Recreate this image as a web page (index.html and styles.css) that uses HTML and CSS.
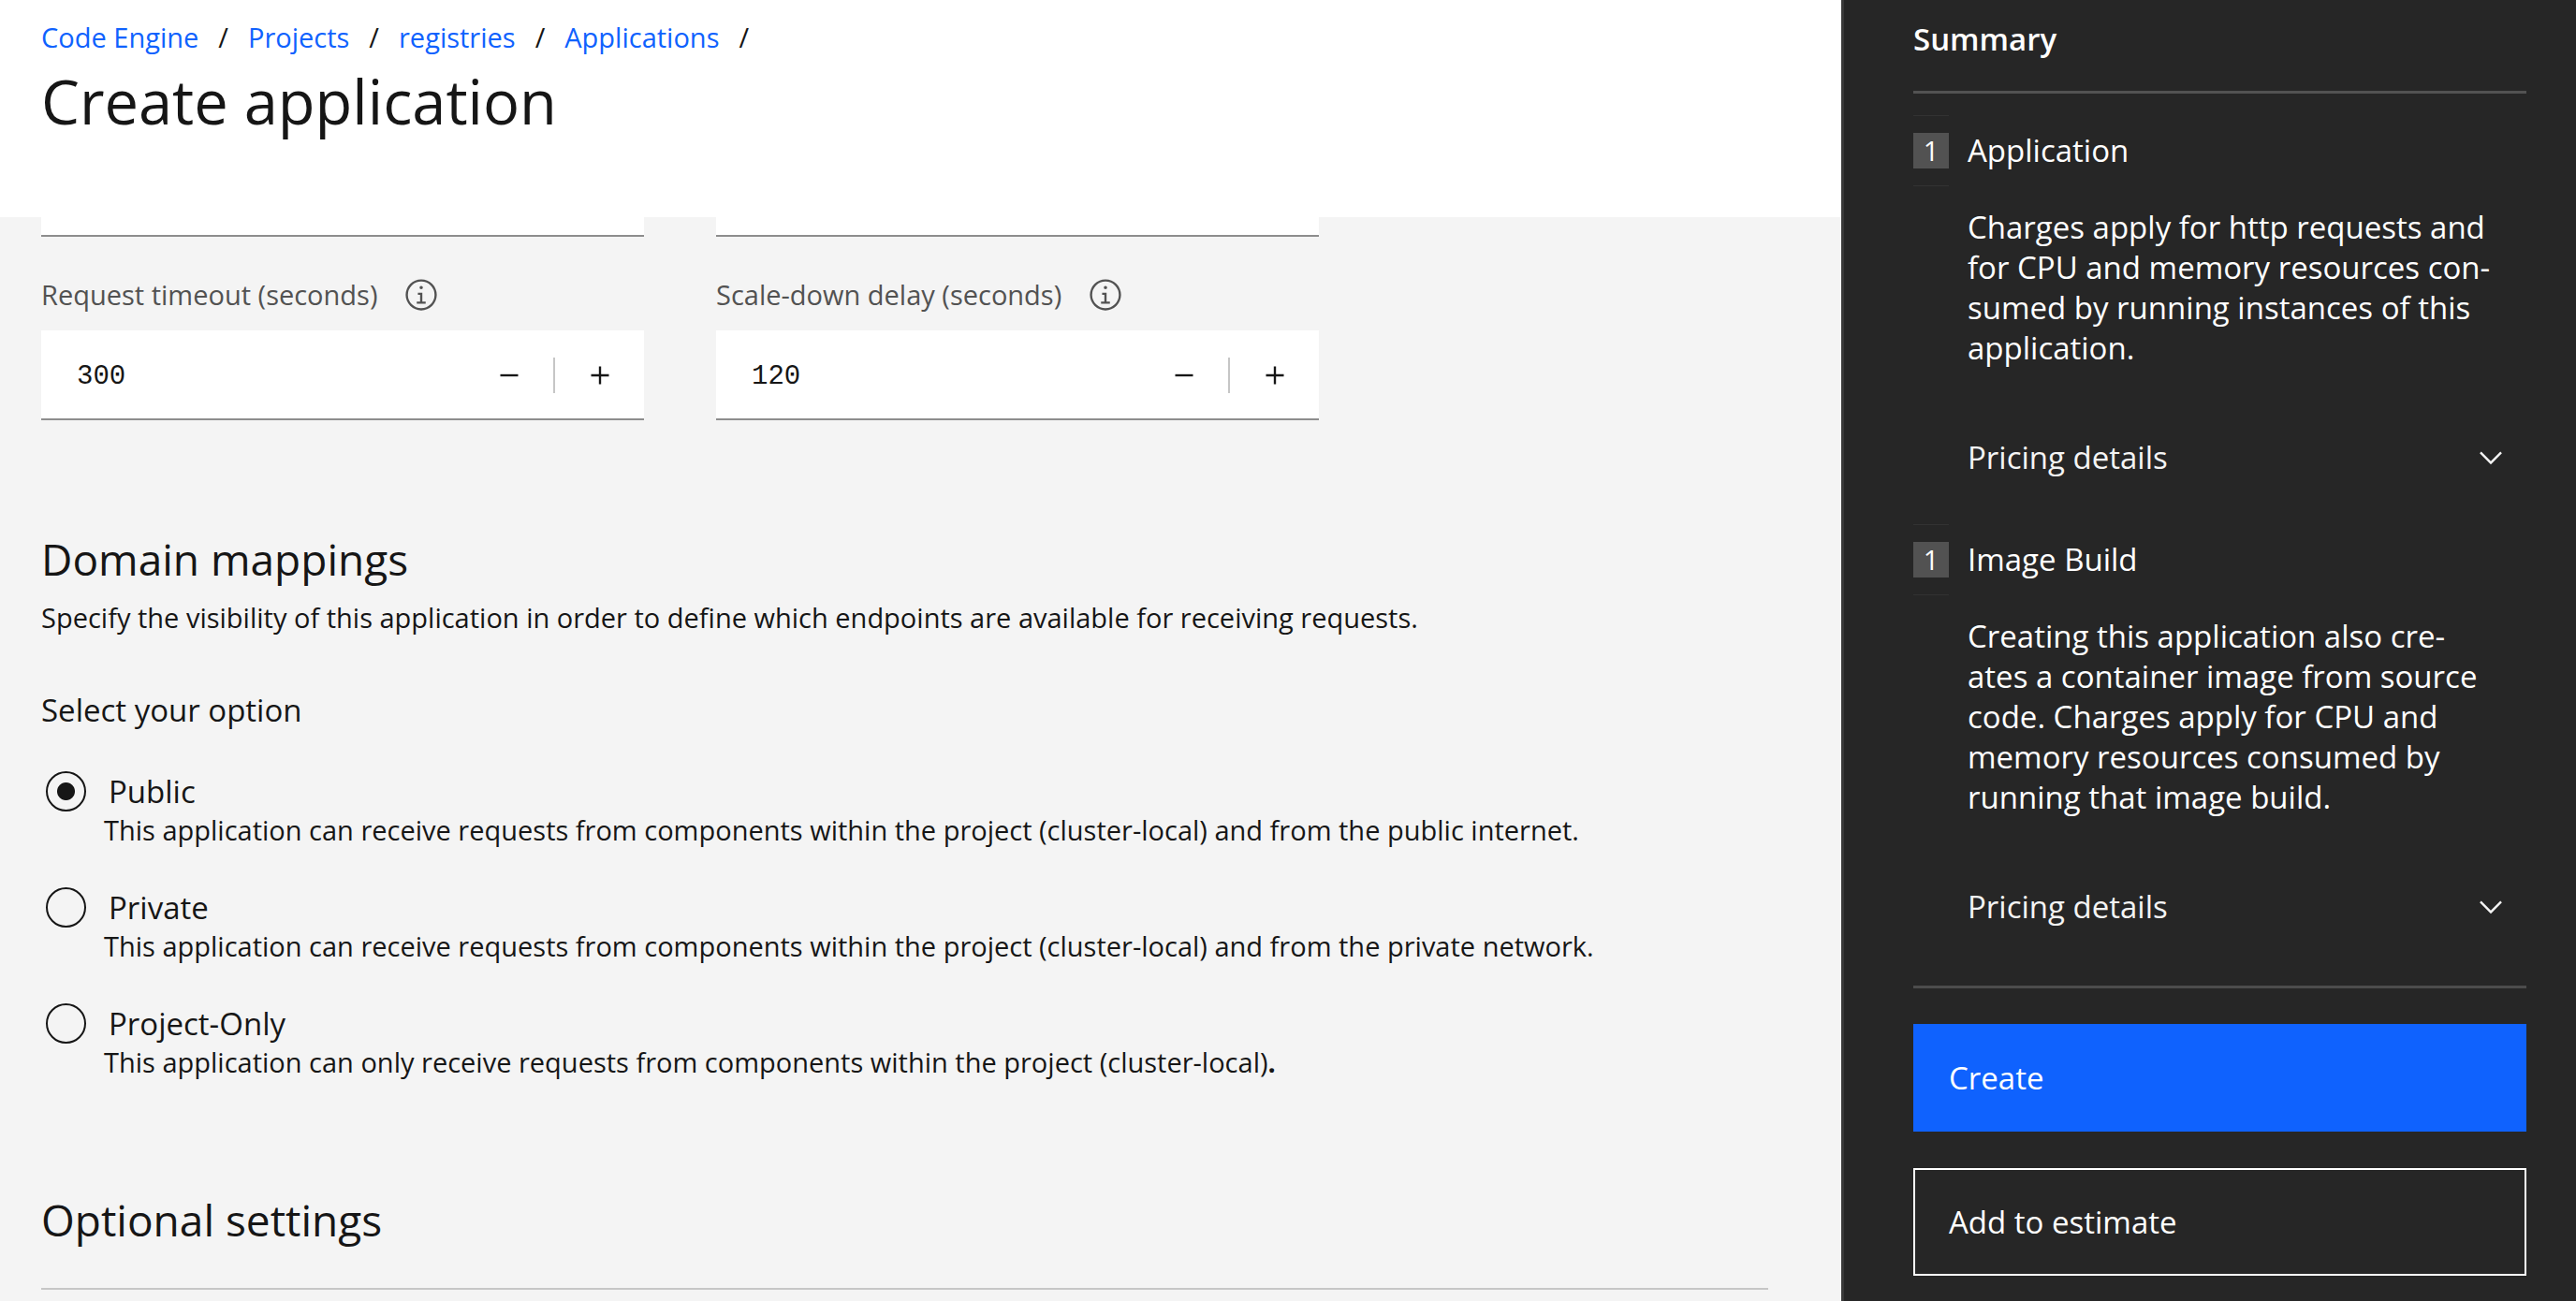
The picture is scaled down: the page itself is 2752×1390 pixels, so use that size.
FILE: index.html
```html
<!DOCTYPE html>
<html lang="en">
<head>
<meta charset="utf-8">
<meta name="viewport" content="width=device-width, initial-scale=1">
<title>Create application</title>
<link rel="stylesheet" href="styles.css">
</head>
<body>
<svg class="sprite" aria-hidden="true">
  <symbol id="info" viewBox="0 0 32 32"><path d="M17 22v-8h-4v2h2v6h-3v2h8v-2zM16 8a1.5 1.5 0 1 0 1.5 1.5A1.5 1.5 0 0 0 16 8z"/><path d="M16 30a14 14 0 1 1 14-14 14 14 0 0 1-14 14zm0-26a12 12 0 1 0 12 12A12 12 0 0 0 16 4z"/></symbol>
  <symbol id="minus" viewBox="0 0 32 32"><path d="M8 15h16v2H8z"/></symbol>
  <symbol id="plus" viewBox="0 0 32 32"><path d="M17 15V8h-2v7H8v2h7v7h2v-7h7v-2z"/></symbol>
  <symbol id="chevron" viewBox="0 0 16 16"><path d="M8 11L3 6l.7-.7L8 9.6l4.300-4.300.7.7z"/></symbol>
</svg>
<div class="page">
  <main class="main">
    <header class="header">
      <nav aria-label="Breadcrumb">
        <ol class="breadcrumb">
          <li><a href="#">Code Engine</a></li>
          <li><a href="#">Projects</a></li>
          <li><a href="#">registries</a></li>
          <li><a href="#">Applications</a></li>
        </ol>
      </nav>
      <h1>Create application</h1>
    </header>
    <form class="content">
      <div class="fields fields-cut"><div class="cut"></div><div class="cut"></div></div>
      <div class="fields">
        <div class="field">
          <div class="field-label"><label for="timeout">Request timeout (seconds)</label>
            <button type="button" class="icon-button" aria-label="About request timeout"><svg class="icon"><use href="#info"/></svg></button></div>
          <div class="number">
            <input id="timeout" type="text" inputmode="numeric" value="300">
            <button type="button" class="step" aria-label="Decrease"><svg class="icon"><use href="#minus"/></svg></button>
            <span class="divider"></span>
            <button type="button" class="step" aria-label="Increase"><svg class="icon"><use href="#plus"/></svg></button>
          </div>
        </div>
        <div class="field">
          <div class="field-label"><label for="delay">Scale-down delay (seconds)</label>
            <button type="button" class="icon-button" aria-label="About scale-down delay"><svg class="icon"><use href="#info"/></svg></button></div>
          <div class="number">
            <input id="delay" type="text" inputmode="numeric" value="120">
            <button type="button" class="step" aria-label="Decrease"><svg class="icon"><use href="#minus"/></svg></button>
            <span class="divider"></span>
            <button type="button" class="step" aria-label="Increase"><svg class="icon"><use href="#plus"/></svg></button>
          </div>
        </div>
      </div>
      <section class="section">
        <h2>Domain mappings</h2>
        <p class="hint">Specify the visibility of this application in order to define which endpoints are available for receiving requests.</p>
        <fieldset class="options">
          <legend>Select your option</legend>
          <div class="option">
            <input type="radio" name="visibility" id="public" aria-describedby="public-hint" checked>
            <label for="public">Public</label>
            <p id="public-hint">This application can receive requests from components within the project (cluster-local) and from the public internet.</p>
          </div>
          <div class="option">
            <input type="radio" name="visibility" id="private" aria-describedby="private-hint">
            <label for="private">Private</label>
            <p id="private-hint">This application can receive requests from components within the project (cluster-local) and from the private network.</p>
          </div>
          <div class="option">
            <input type="radio" name="visibility" id="project" aria-describedby="project-hint">
            <label for="project">Project-Only</label>
            <p id="project-hint">This application can only receive requests from components within the project (cluster-local)<b>.</b></p>
          </div>
        </fieldset>
      </section>
      <section class="section optional">
        <h2>Optional settings</h2>
      </section>
    </form>
  </main>
  <aside class="summary">
    <h2>Summary</h2>
    <section class="item">
      <div class="badge">1</div>
      <h3>Application</h3>
      <p>Charges apply for http requests and for CPU and memory resources con&shy;sumed by running instances of this application.</p>
      <button type="button" class="pricing">Pricing details<svg class="icon"><use href="#chevron"/></svg></button>
    </section>
    <section class="item">
      <div class="badge">1</div>
      <h3>Image Build</h3>
      <p>Creating this application also cre&shy;ates a container image from source code. Charges apply for CPU and memory resources consumed by running that image build.</p>
      <button type="button" class="pricing">Pricing details<svg class="icon"><use href="#chevron"/></svg></button>
    </section>
    <div class="actions">
      <button type="button" class="action primary">Create</button>
      <button type="button" class="action">Add to estimate</button>
    </div>
  </aside>
</div>
</body>
</html>
```

FILE: styles.css
```css
:root {
  --small: 29px;
  --body: 33px;
  --ink: #161616;
}

* { box-sizing: border-box; }

body, h1, h2, h3, p, ol, fieldset, legend {
  margin: 0;
  padding: 0;
  font-weight: 400;
}

body {
  font-family: "Open Sans", "Noto Sans", sans-serif;
  font-size: var(--small);
  line-height: 40px;
  color: var(--ink);
}

button, input {
  margin: 0;
  padding: 0;
  border: 0;
  border-radius: 0;
  background: none;
  color: inherit;
  font: inherit;
}

button { cursor: pointer; }

.sprite { position: absolute; width: 0; height: 0; }
.icon { display: block; flex: none; width: 38px; height: 38px; fill: currentColor; }

.page {
  display: grid;
  grid-template-columns: minmax(0, 1fr) 785px;
  min-height: 100vh;
}

.main { background: #f4f4f4; }

.header {
  min-height: 232px;
  padding: 20px 44px;
  background: #fff;
}

.breadcrumb { display: flex; list-style: none; }
.breadcrumb a { color: #0f62fe; text-decoration: none; }
.breadcrumb li::after { content: "/"; margin: 0 21px; }

h1 { margin-top: 8px; font-size: 65px; line-height: 80px; }

.content { padding: 0 44px; }

.fields {
  display: grid;
  grid-template-columns: repeat(2, minmax(0, 644px));
  gap: 77px;
}

.fields-cut { margin-bottom: 42px; }
.cut { height: 21px; background: #fff; border-bottom: 2px solid #8d8d8d; }

.field-label {
  display: flex;
  align-items: center;
  gap: 28px;
  height: 40px;
  margin-bottom: 18px;
  color: #525252;
}

.number {
  display: flex;
  align-items: center;
  height: 96px;
  background: #fff;
  box-shadow: inset 0 -2px #8d8d8d;
}

.number input {
  flex: 1;
  min-width: 0;
  padding: 4px 0 0 38px;
  font-family: "Liberation Mono", monospace;
  font-size: 29px;
}

.step { display: grid; place-items: center; width: 95px; height: 96px; }
.divider { width: 2px; height: 38px; background: #c6c6c6; }

.section { margin-top: 116px; }
.section h2 { font-size: 46px; line-height: 64px; }
.hint { margin-top: 11px; }

.options { margin-top: 57px; border: 0; min-width: 0; }
.options legend { margin-bottom: 44px; font-size: var(--body); line-height: 43px; }

.option {
  display: grid;
  grid-template-columns: 43px 1fr;
  column-gap: 24px;
  align-items: center;
  padding-left: 5px;
}

.option + .option { margin-top: 41px; }
.option label { font-size: var(--body); line-height: 43px; }
.option p { grid-column: 1 / -1; padding-left: 62px; }

.option input {
  appearance: none;
  width: 43px;
  height: 43px;
  border: 2px solid var(--ink);
  border-radius: 50%;
}

.option input:checked { background: radial-gradient(circle, var(--ink) 9px, transparent 10px); }

.optional { padding-bottom: 41px; margin-right: 34px; border-bottom: 2px solid #c6c6c6; }

.summary {
  padding: 20px 53px 26px 74px;
  background: #262626;
  border-left: 3px solid #393939;
  color: #fff;
  font-size: var(--body);
  line-height: 43px;
}

.summary h2 {
  padding-bottom: 34px;
  border-bottom: 3px solid #525252;
  font-size: var(--body);
  font-weight: 600;
}

.item {
  display: grid;
  grid-template-columns: 38px minmax(0, 1fr);
  column-gap: 20px;
  align-items: center;
  margin-top: 39px;
}

.item + .item { margin-top: 66px; }
.item h3 { font-size: var(--body); }
.item p { grid-column: 2; margin: 39px 0 74px; padding-right: 36px; }

.badge {
  height: 38px;
  background: #525252;
  font-size: var(--small);
  line-height: 38px;
  text-align: center;
  outline: 1px solid #323232;
  outline-offset: 18px;
  clip-path: inset(-20px 0);
}

.pricing {
  grid-column: 2;
  display: flex;
  justify-content: space-between;
  align-items: center;
  padding-right: 19px;
  color: #f4f4f4;
  text-align: left;
}

.actions {
  display: grid;
  gap: 39px;
  margin-top: 63px;
  padding-top: 38px;
  border-top: 3px solid #4c4c4c;
}

.action {
  height: 115px;
  padding: 0 36px;
  border: 2px solid #fff;
  text-align: left;
}

.primary { background: #0f62fe; border-color: #0f62fe; }
```
